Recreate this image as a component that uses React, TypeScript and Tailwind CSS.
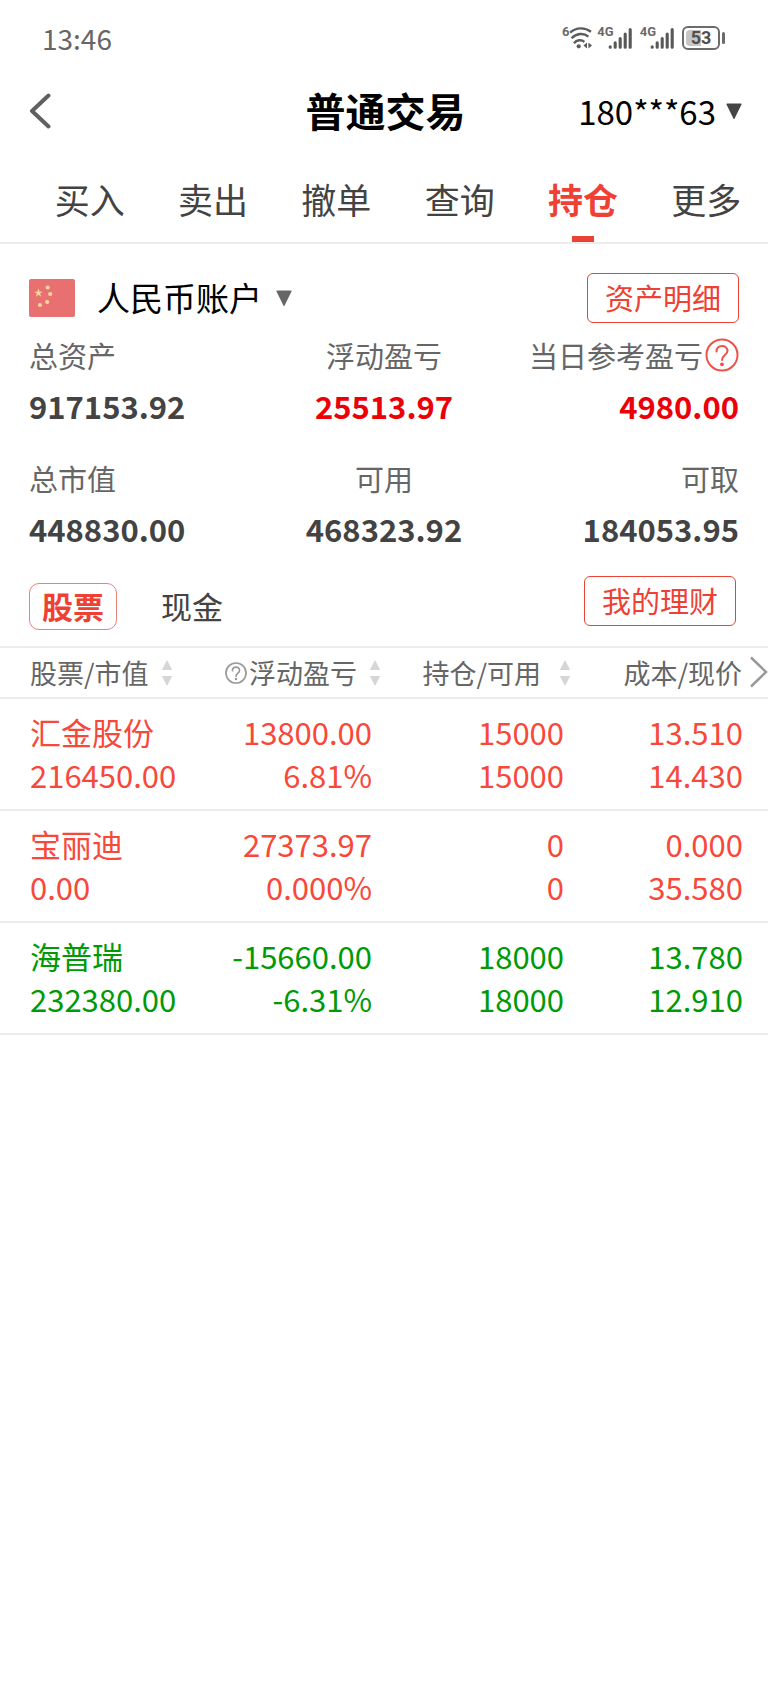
import React from "react";

type Tone = "up" | "down";

interface Holding {
  name: string;
  marketValue: string;
  profit: string;
  profitRate: string;
  position: string;
  available: string;
  cost: string;
  price: string;
  tone: Tone;
}

const tabs = ["买入", "卖出", "撤单", "查询", "持仓", "更多"];
const activeTab = "持仓";

const holdings: Holding[] = [
  { name: "汇金股份", marketValue: "216450.00", profit: "13800.00", profitRate: "6.81%", position: "15000", available: "15000", cost: "13.510", price: "14.430", tone: "up" },
  { name: "宝丽迪", marketValue: "0.00", profit: "27373.97", profitRate: "0.000%", position: "0", available: "0", cost: "0.000", price: "35.580", tone: "up" },
  { name: "海普瑞", marketValue: "232380.00", profit: "-15660.00", profitRate: "-6.31%", position: "18000", available: "18000", cost: "13.780", price: "12.910", tone: "down" },
];

const toneClass: Record<Tone, string> = {
  up: "text-[#f8483a]",
  down: "text-[#009a06]",
};

function Triangle({ className }: { className: string }) {
  return (
    <svg viewBox="0 0 16 16" className={`h-4 w-4 shrink-0 ${className}`} aria-hidden="true">
      <path d="M1 0.5h14a.6.6 0 0 1 .5.9L8.6 15.4a.7.7 0 0 1-1.2 0L.5 1.4A.6.6 0 0 1 1 .5z" fill="currentColor" />
    </svg>
  );
}

function WifiIcon() {
  return (
    <svg viewBox="0 0 24 24" className="h-6 w-6 text-[#5c5c5c]" fill="none" stroke="currentColor" strokeWidth="2.4" aria-hidden="true">
      <path d="M1.2 6.6C7.4 1.2 15.6 1 22 5.8" />
      <path d="M2.6 12.2c4.6-5 12.2-5.6 16.800-1.600" />
      <path d="M5 17.200c2.600-3.600 7.600-3.800 10.400-1.400" />
      <circle cx="9.700" cy="20.300" r="2.100" fill="currentColor" stroke="none" />
      <path d="M18 16.500v6l-3.600-3zM19.400 16.500v6l3.600-3z" fill="currentColor" stroke="none" />
    </svg>
  );
}

function Signal() {
  return (
    <div className="flex items-start">
      <span className="font-['Roboto'] text-[13px] leading-3 font-bold text-[#6a6a6a]">4G</span>
      <svg viewBox="0 0 24 24" className="-ml-1.5 h-6 w-6 text-[#585858]" stroke="currentColor" strokeWidth="3.100" strokeLinecap="round" aria-hidden="true">
        <path d="M2.200 20.700v.5M7.200 16.800v4.400M12.200 12.500v8.700M17.200 8v13.200M22.200 3.500v17.700" />
      </svg>
    </div>
  );
}

function StatusBar() {
  return (
    <div className="flex h-18 items-center justify-between pt-1 pr-[43px] pl-[42px]">
      <span className="text-[28px] leading-9 text-[#666]">13:46</span>
      <div className="flex h-6 items-start">
        <div className="mr-1 flex items-start">
          <span className="font-['Roboto'] text-[13px] leading-3 font-bold text-[#6a6a6a]">6</span>
          <WifiIcon />
        </div>
        <Signal />
        <div className="ml-2 flex">
          <Signal />
        </div>
        <div className="ml-2 flex items-center">
          <div className="relative flex h-6 w-[38px] items-center justify-center rounded-md border-2 border-[#6b6b6b]">
            <div className="absolute inset-y-0.5 left-0.5 w-[15px] rounded-l-sm bg-[#c6c6c6]" />
            <span className="relative font-['Roboto'] text-[18px] leading-5 font-bold text-[#505050]">53</span>
          </div>
          <div className="ml-0.5 h-3 w-[3px] rounded-sm bg-[#6b6b6b]" />
        </div>
      </div>
    </div>
  );
}

function Header() {
  return (
    <header className="grid h-20 grid-cols-[1fr_auto_1fr] items-center pr-[26px] pb-0.5 pl-[29px]">
      <button type="button" aria-label="返回" className="justify-self-start">
        <svg viewBox="0 0 22 36" className="h-9 w-[22px] text-[#606060]" fill="none" stroke="currentColor" strokeWidth="4" strokeLinecap="round" strokeLinejoin="round" aria-hidden="true">
          <path d="M19.500 2.500 3 18l16.500 15.500" />
        </svg>
      </button>
      <h1 className="pb-0.5 text-[40px] leading-12 font-bold text-black">普通交易</h1>
      <button type="button" className="flex items-center justify-self-end gap-2.5 text-[33px] leading-10 text-black">
        180***63
        <Triangle className="text-[#444]" />
      </button>
    </header>
  );
}

function Tabs() {
  return (
    <nav className="flex h-[92px] border-b-2 border-[#ededed] pl-7">
      {tabs.map((tab) => {
        const active = tab === activeTab;
        return (
          <a
            key={tab}
            href="#"
            aria-current={active ? "page" : undefined}
            className={`relative flex flex-1 items-center justify-center pt-1 text-[35px] leading-11 ${active ? "font-bold text-[#ef4034]" : "text-[#434343]"}`}
          >
            {tab}
            {active && <span className="absolute bottom-0 left-1/2 h-1.5 w-[22px] -translate-x-1/2 bg-[#ea4335]" />}
          </a>
        );
      })}
    </nav>
  );
}

function OutlineButton({ children }: { children: React.ReactNode }) {
  return (
    <button type="button" className="h-[50px] rounded-md border border-[#ea4335] px-[17px] pb-0.5 text-[29px] leading-9 text-[#ef4034]">
      {children}
    </button>
  );
}

function Flag() {
  const star = "M0-4 1-1.200 3.800-1.200 1.500.5 2.400 3.300 0 1.600-2.400 3.300-1.500.5-3.800-1.200-1-1.200z";
  return (
    <svg viewBox="0 0 46 38" className="h-[38px] w-[46px]" aria-hidden="true">
      <rect width="46" height="38" rx="2" fill="#e87070" />
      <g fill="#f9d6a0">
        <path d={star} transform="translate(9.500 14) scale(1.100)" />
        <circle cx="18.700" cy="8.500" r="2.100" />
        <circle cx="21.200" cy="15" r="2.100" />
        <circle cx="18.200" cy="23" r="2.100" />
        <circle cx="11" cy="26" r="2.100" />
      </g>
    </svg>
  );
}

function HelpIcon({ className, width }: { className: string; width: number }) {
  return (
    <svg viewBox="0 0 34 34" className={`shrink-0 ${className}`} fill="none" stroke="currentColor" strokeWidth={width} aria-hidden="true">
      <circle cx="17" cy="17" r="15.500" />
      <path d="M11.500 13.500c0-7.500 11-7.300 11-.5 0 4-5.500 4.300-5.500 9" strokeLinecap="round" />
      <circle cx="17" cy="26.300" r="1.900" fill="currentColor" stroke="none" />
    </svg>
  );
}

function Stat({ label, value, align, red, help }: { label: string; value: string; align: string; red?: boolean; help?: boolean }) {
  return (
    <div className={`flex flex-col gap-[13px] ${align}`}>
      <dt className="flex items-center text-[29px] leading-[38px] whitespace-nowrap text-[#666]">
        {label}
        {help && (
          <button type="button" aria-label="说明" className="ml-0.5 text-[#ee5148]">
            <HelpIcon className="h-[34px] w-[34px]" width={2} />
          </button>
        )}
      </dt>
      <dd className={`text-[31px] leading-[38px] font-bold ${red ? "text-[#ec0007]" : "text-[#434343]"}`}>{value}</dd>
    </div>
  );
}

function AccountSummary() {
  return (
    <section className="px-[29px] pt-[29px]">
      <div className="flex items-center justify-between">
        <label className="flex items-center">
          <Flag />
          <select aria-label="账户" className="ml-[22px] appearance-none bg-transparent pb-0.5 text-[33px] leading-10 text-black">
            <option>人民币账户</option>
          </select>
          <Triangle className="ml-3.5 text-[#666]" />
        </label>
        <OutlineButton>资产明细</OutlineButton>
      </div>
      <dl className="mt-[13px] grid grid-cols-3 gap-y-[34px]">
        <Stat label="总资产" value="917153.92" align="items-start" />
        <Stat label="浮动盈亏" value="25513.97" align="items-center" red />
        <Stat label="当日参考盈亏" value="4980.00" align="items-end" red help />
        <Stat label="总市值" value="448830.00" align="items-start" />
        <Stat label="可用" value="468323.92" align="items-center" />
        <Stat label="可取" value="184053.95" align="items-end" />
      </dl>
    </section>
  );
}

function AssetSwitch() {
  return (
    <div className="mt-7 flex h-[54px] justify-between pr-8 pl-[29px]">
      <div className="flex items-end gap-8">
        <button type="button" aria-pressed="true" className="h-[47px] rounded-[10px] border border-[#e8837b] px-3 pb-0.5 text-[31px] leading-10 font-bold text-[#ef4034]">
          股票
        </button>
        <button type="button" aria-pressed="false" className="h-[47px] px-3 pb-0.5 text-[31px] leading-10 text-[#434343]">
          现金
        </button>
      </div>
      <OutlineButton>我的理财</OutlineButton>
    </div>
  );
}

function SortButton({ label, gap, help }: { label: string; gap: string; help?: boolean }) {
  return (
    <button type="button" className={`inline-flex items-center whitespace-nowrap ${gap}`}>
      <span className="flex items-center gap-0.5">
        {help && <HelpIcon className="h-[22px] w-[22px] text-[#999]" width={2.6} />}
        {label}
      </span>
      <svg viewBox="0 0 12 26" className="h-[26px] w-3" fill="#d6d6d6" aria-hidden="true">
        <path d="M6 0 11.200 10H.8zM.8 16h10.400L6 26z" />
      </svg>
    </button>
  );
}

function HoldingsTable() {
  const cell = "border-b-2 border-[#ededed] pt-[11px] pb-[13px]";
  const head = "h-[53px] border-y-2 border-[#ededed] p-0 font-normal";
  return (
    <div className="relative mt-4">
      <table className="w-full table-fixed border-separate border-spacing-0">
        <thead className="text-[27px] leading-9 text-[#666]">
          <tr>
            <th className={`${head} pl-[30px] text-left`}>
              <SortButton label="股票/市值" gap="gap-3" />
            </th>
            <th className={`${head} pr-[3px] text-right`}>
              <SortButton label="浮动盈亏" gap="gap-3" help />
            </th>
            <th className={`${head} pr-[5px] text-right`}>
              <SortButton label="持仓/可用" gap="gap-[18px]" />
            </th>
            <th className={`${head} pr-[26px] text-right`}>成本/现价</th>
          </tr>
        </thead>
        <tbody className="text-[31px] leading-[43px]">
          {holdings.map((h) => (
            <tr key={h.name} className={toneClass[h.tone]}>
              <td className={`${cell} pl-[30px]`}>
                <div>{h.name}</div>
                <div>{h.marketValue}</div>
              </td>
              <td className={`${cell} pr-3 text-right`}>
                <div>{h.profit}</div>
                <div>{h.profitRate}</div>
              </td>
              <td className={`${cell} pr-3 text-right`}>
                <div>{h.position}</div>
                <div>{h.available}</div>
              </td>
              <td className={`${cell} pr-[25px] text-right`}>
                <div>{h.cost}</div>
                <div>{h.price}</div>
              </td>
            </tr>
          ))}
        </tbody>
      </table>
      <button type="button" aria-label="更多列" className="absolute top-2.5 right-0 text-[#999]">
        <svg viewBox="0 0 18 32" className="h-8 w-[18px]" fill="none" stroke="currentColor" strokeWidth="2.500" aria-hidden="true">
          <path d="M1 1.500 16 16 1 30.500" />
        </svg>
      </button>
    </div>
  );
}

export default function App() {
  return (
    <main className="min-h-screen bg-white font-['Noto_Sans_CJK_SC',sans-serif]">
      <StatusBar />
      <Header />
      <Tabs />
      <AccountSummary />
      <AssetSwitch />
      <HoldingsTable />
    </main>
  );
}
